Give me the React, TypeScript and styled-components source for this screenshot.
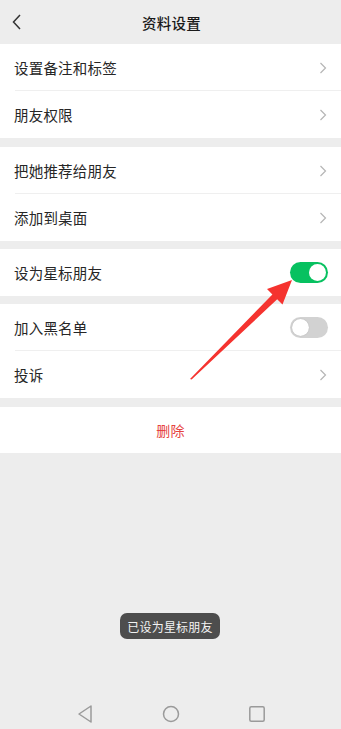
import React from "react";
import styled, { createGlobalStyle } from "styled-components";

const Global = createGlobalStyle`
  html, body { margin: 0; padding: 0; background: #ededed; }
  body { font-family: "Noto Sans CJK SC", "Noto Sans", sans-serif; }
  * { box-sizing: border-box; }
`;

const Screen = styled.div`
  position: relative;
  width: 341px;
  height: 729px;
  background: #ededed;
  overflow: hidden;
  display: flex;
  flex-direction: column;
`;

const Header = styled.div`
  height: 44px;
  flex: none;
  display: flex;
  align-items: center;
  justify-content: center;
  position: relative;
`;

const BackBtn = styled.div`
  position: absolute;
  left: 10px;
  top: 13px;
  width: 16px;
  height: 18px;
  display: flex;
`;

const Title = styled.div`
  font-size: 14.5px;
  font-weight: 500;
  color: #1a1a1a;
  letter-spacing: 0.2px;
  margin-left: 2px;
`;

const Group = styled.div<{ $gap?: number }>`
  background: #fff;
  margin-top: ${(p) => p.$gap ?? 0}px;
  display: flex;
  flex-direction: column;
`;

const Row = styled.div<{ $divider?: boolean }>`
  height: 47px;
  display: flex;
  align-items: center;
  padding: 0 14px;
  position: relative;
  ${(p) =>
    p.$divider
      ? `&::after { content: ""; position: absolute; left: 15px; right: 0; bottom: 0; height: 1px; background: #efefef; }`
      : ""}
`;

const Label = styled.div`
  flex: 1;
  font-size: 14.5px;
  color: #262626;
  letter-spacing: 0.2px;
`;

const DangerRow = styled.div`
  height: 46px;
  display: flex;
  align-items: center;
  justify-content: center;
  font-size: 14px;
  color: #e64340;
  letter-spacing: 0.3px;
`;

const Toggle = styled.div<{ $on?: boolean }>`
  width: 38px;
  height: 21px;
  border-radius: 11px;
  background: ${(p) => (p.$on ? "#07c160" : "#d2d2d2")};
  position: relative;
  flex: none;
  margin-right: -1px;
`;

const Knob = styled.div<{ $on?: boolean }>`
  position: absolute;
  top: 2px;
  ${(p) => (p.$on ? "right: 2px;" : "left: 2px;")}
  width: 17px;
  height: 17px;
  border-radius: 50%;
  background: #fff;
  box-shadow: ${(p) => (p.$on ? "none" : "0 0 1px rgba(0,0,0,0.25)")};
`;

const Toast = styled.div`
  position: absolute;
  left: 120px;
  top: 613px;
  width: 100px;
  height: 26px;
  border-radius: 7px;
  background: #4d4d4d;
  color: #f2f2f2;
  font-size: 12px;
  display: flex;
  align-items: center;
  justify-content: center;
  letter-spacing: 0.2px;
`;

const NavBar = styled.div`
  margin-top: auto;
  height: 30px;
  display: flex;
  justify-content: center;
  align-items: center;
  gap: 56px;
  padding-left: 0px;
  margin-bottom: 0px;
`;

const NavIcon = styled.div`
  width: 30px;
  height: 30px;
  display: flex;
  align-items: center;
  justify-content: center;
`;

const ArrowLayer = styled.svg`
  position: absolute;
  left: 0;
  top: 0;
  pointer-events: none;
`;

const Chevron = () => (
  <svg width="8" height="12" viewBox="0 0 8 12" style={{ flex: "none" }}>
    <path d="M1.5 1 L6.5 6 L1.5 11" fill="none" stroke="#b5b5b5" strokeWidth="1.2" />
  </svg>
);

const rows1 = ["设置备注和标签", "朋友权限"];
const rows2 = ["把她推荐给朋友", "添加到桌面"];

export default function App() {
  return (
    <Screen>
      <Global />
      <Header>
        <BackBtn>
          <svg width="16" height="18" viewBox="0 0 16 18">
            <path d="M10 2 L3.5 9 L10 16" fill="none" stroke="#333" strokeWidth="1.5" />
          </svg>
        </BackBtn>
        <Title>资料设置</Title>
      </Header>

      <Group>
        {rows1.map((r, i) => (
          <Row key={r} $divider={i < rows1.length - 1}>
            <Label>{r}</Label>
            <Chevron />
          </Row>
        ))}
      </Group>

      <Group $gap={9}>
        {rows2.map((r, i) => (
          <Row key={r} $divider={i < rows2.length - 1}>
            <Label>{r}</Label>
            <Chevron />
          </Row>
        ))}
      </Group>

      <Group $gap={8}>
        <Row>
          <Label>设为星标朋友</Label>
          <Toggle $on>
            <Knob $on />
          </Toggle>
        </Row>
      </Group>

      <Group $gap={8}>
        <Row $divider>
          <Label>加入黑名单</Label>
          <Toggle>
            <Knob />
          </Toggle>
        </Row>
        <Row>
          <Label>投诉</Label>
          <Chevron />
        </Row>
      </Group>

      <Group $gap={9}>
        <DangerRow>删除</DangerRow>
      </Group>

      <NavBar>
        <NavIcon>
          <svg width="18" height="20" viewBox="0 0 18 20">
            <path d="M15 2 L3 10 L15 18 Z" fill="none" stroke="#9a9a9a" strokeWidth="1.5" strokeLinejoin="round" />
          </svg>
        </NavIcon>
        <NavIcon>
          <svg width="20" height="20" viewBox="0 0 20 20">
            <circle cx="10" cy="10" r="7.5" fill="none" stroke="#9a9a9a" strokeWidth="1.5" />
          </svg>
        </NavIcon>
        <NavIcon>
          <svg width="18" height="18" viewBox="0 0 18 18">
            <rect x="1.8" y="1.8" width="14.4" height="14.4" rx="1.5" fill="none" stroke="#9a9a9a" strokeWidth="1.5" />
          </svg>
        </NavIcon>
      </NavBar>

      <Toast>已设为星标朋友</Toast>

      <ArrowLayer width="341" height="729" viewBox="0 0 341 729">
        <polygon
          points="292,280 267,289 272.4,294.5 190,379 191.6,379.5 277.2,299.3 282.5,304.6"
          fill="#f5332f"
        />
      </ArrowLayer>
    </Screen>
  );
}
